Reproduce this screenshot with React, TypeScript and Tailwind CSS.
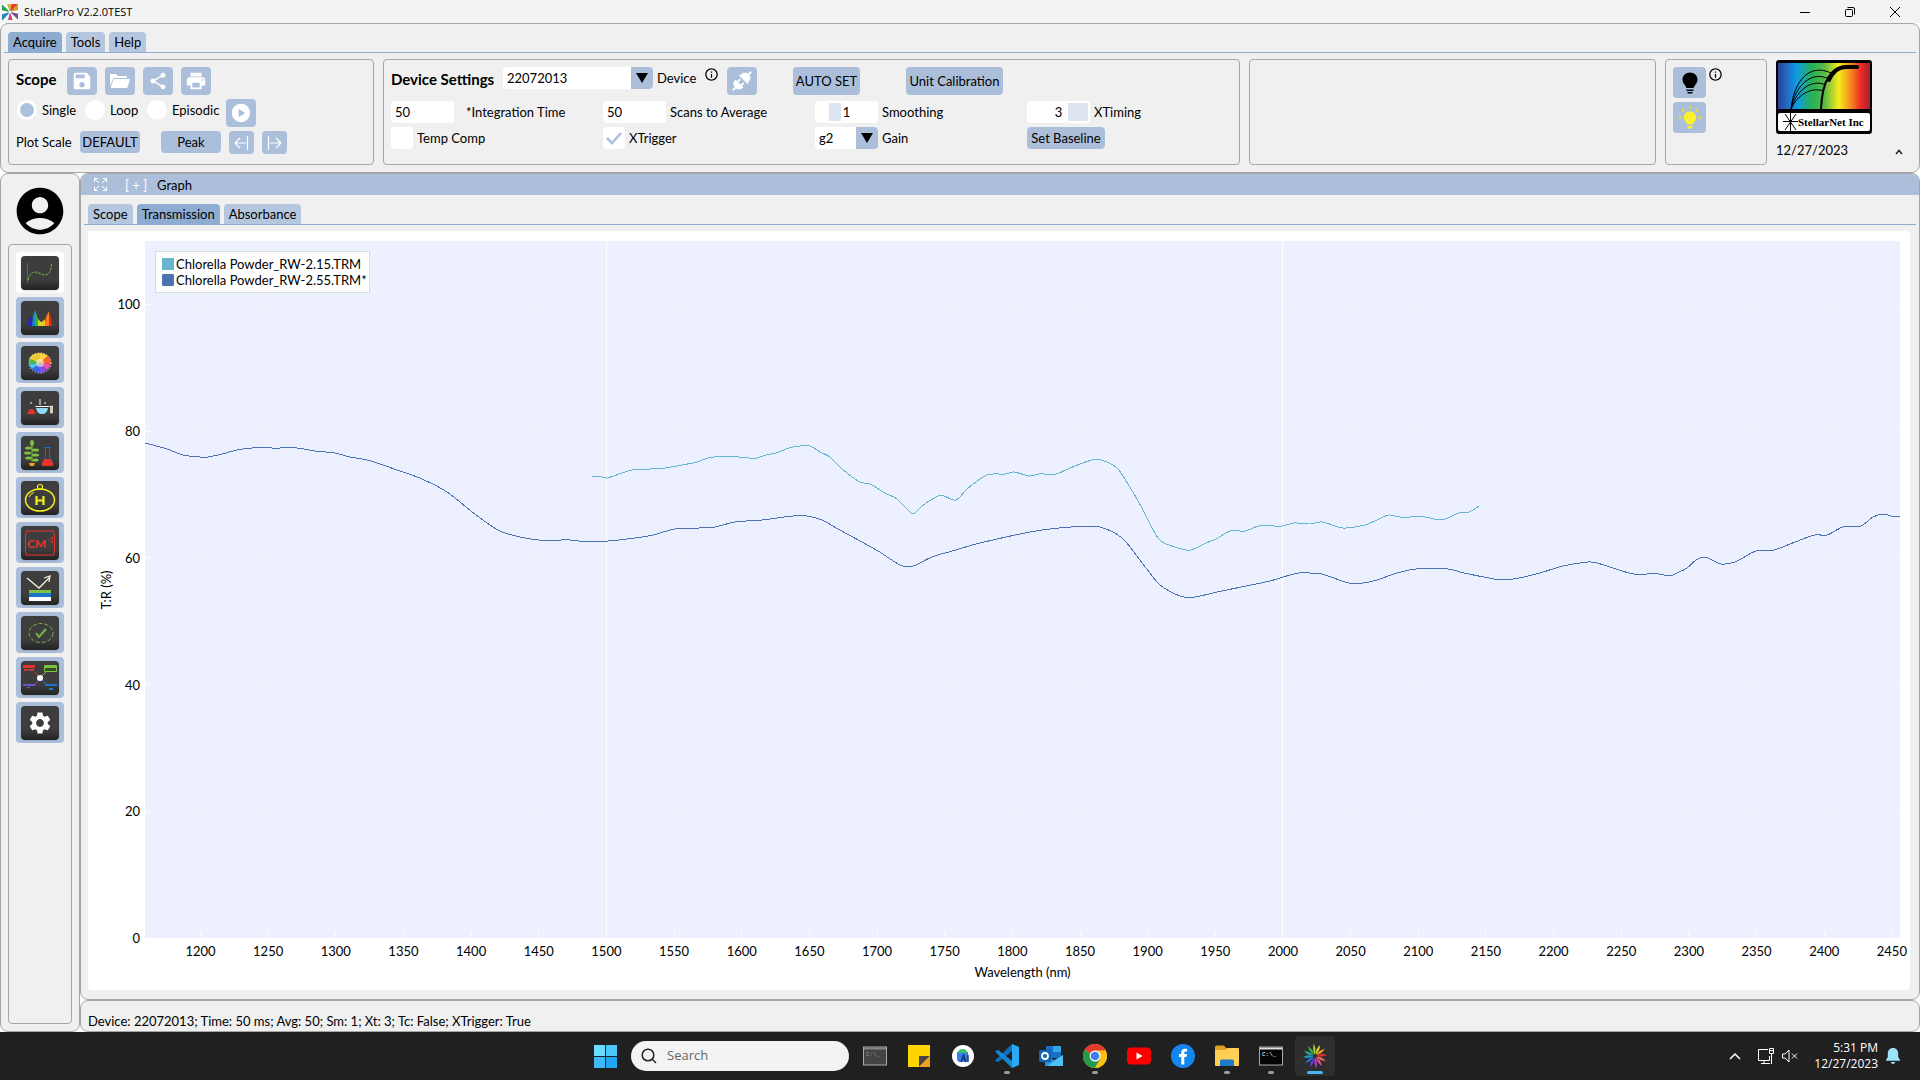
import type { ReactNode } from "react";
import { MdAccountCircle, MdInfoOutline, MdPlayCircle, MdPrint, MdSave, MdSettings, MdShare } from "react-icons/md";

type Point = [number, number];

const WAVE_MIN = 1159;
const WAVE_MAX = 2456;
const T_MAX = 110;

const xTicks = Array.from({ length: 26 }, (_, i) => 1200 + i * 50);
const yTicks = [0, 20, 40, 60, 80, 100];

// Plot units: 1755 wide, 697 high, origin top left
const scanA: Point[] = [
  [447, 236], [457, 236], [462, 237], [487, 229], [505, 228], [520, 227], [537, 224], [552, 221], [563, 217],
  [581, 215], [604, 217], [612, 217], [621, 214], [631, 212], [644, 207], [655, 205], [665, 205], [675, 211],
  [685, 216], [697, 228], [715, 241], [725, 243], [740, 252], [752, 258], [766, 272], [770, 272], [777, 265],
  [793, 255], [799, 255], [811, 259], [822, 248], [842, 234], [860, 233], [869, 231], [884, 235], [894, 233],
  [911, 233], [925, 227], [947, 219], [956, 219], [972, 227], [983, 243], [997, 267], [1011, 294], [1019, 302],
  [1041, 309], [1046, 309], [1061, 302], [1071, 298], [1085, 290], [1100, 290], [1114, 285], [1137, 285],
  [1149, 282], [1165, 283], [1177, 281], [1198, 287], [1220, 284], [1232, 279], [1244, 274], [1255, 276],
  [1280, 276], [1294, 279], [1303, 277], [1314, 272], [1324, 271], [1334, 265],
];

const scanB: Point[] = [
  [0, 202], [22, 208], [38, 214], [55, 216], [63, 216], [77, 213], [92, 209], [107, 207], [127, 207], [130, 208],
  [135, 207], [152, 207], [170, 210], [190, 212], [205, 216], [222, 219], [235, 223], [252, 229], [277, 238],
  [302, 251], [326, 270], [345, 284], [357, 291], [375, 296], [394, 299], [425, 299], [434, 300], [463, 300],
  [490, 297], [508, 294], [530, 288], [554, 287], [570, 286], [590, 281], [617, 279], [648, 275], [662, 275],
  [677, 279], [693, 288], [733, 310], [755, 324], [764, 326], [771, 324], [787, 316], [811, 309], [831, 303],
  [885, 291], [914, 287], [950, 285], [958, 287], [970, 292], [981, 301], [1001, 327], [1014, 343], [1028, 352],
  [1039, 356], [1050, 356], [1072, 351], [1125, 340], [1138, 336], [1154, 332], [1165, 332], [1177, 333],
  [1204, 342], [1218, 342], [1232, 339], [1252, 332], [1271, 328], [1303, 328], [1319, 332], [1344, 337],
  [1358, 339], [1374, 337], [1395, 332], [1418, 325], [1443, 321], [1452, 322], [1484, 332], [1498, 334],
  [1507, 332], [1526, 335], [1530, 333], [1542, 327], [1551, 319], [1559, 316], [1565, 318], [1576, 323],
  [1590, 321], [1611, 310], [1629, 309], [1645, 303], [1670, 294], [1682, 294], [1698, 286], [1716, 285],
  [1728, 276], [1739, 273], [1746, 275], [1755, 276],
];

const xPct = (nm: number) => `${((nm - WAVE_MIN) / (WAVE_MAX - WAVE_MIN)) * 100}%`;
const yPct = (t: number) => `${(1 - t / T_MAX) * 100}%`;

// Smooth curve through the samples, with control points a third of the way along x
function toPath(pts: Point[]) {
  const slope = (i: number) => {
    const a = pts[Math.max(i - 1, 0)];
    const b = pts[Math.min(i + 1, pts.length - 1)];
    return (b[1] - a[1]) / (b[0] - a[0]);
  };
  return pts
    .map(([x, y], i) => {
      if (i === 0) return `M${x} ${y}`;
      const [px, py] = pts[i - 1];
      const d = (x - px) / 3;
      return `C${px + d} ${py + slope(i - 1) * d} ${x - d} ${y - slope(i) * d} ${x} ${y}`;
    })
    .join("");
}

/* ---------- small pieces ---------- */

function Button({ children, className = "", label }: { children: ReactNode; className?: string; label?: string }) {
  return (
    <button
      type="button"
      aria-label={label}
      className={`flex shrink-0 items-center justify-center rounded bg-[#abbfdb] whitespace-nowrap ${className}`}
    >
      {children}
    </button>
  );
}

function Tab({ children, active }: { children: ReactNode; active?: boolean }) {
  return (
    <button
      type="button"
      className={`h-5 rounded-t px-[5px] leading-5 ${active ? "bg-[#8eabd1]" : "bg-[#b5c7df]"}`}
    >
      {children}
    </button>
  );
}

function Radio({ id, label, checked, width }: { id: string; label: string; checked?: boolean; width: string }) {
  return (
    <div className="flex items-center gap-[5px]">
      <input
        id={id}
        type="radio"
        name="mode"
        defaultChecked={checked}
        className="size-5 appearance-none rounded-full border-[3px] border-white bg-white checked:bg-[#abc2df]"
      />
      <label htmlFor={id} className={width}>
        {label}
      </label>
    </div>
  );
}

function Field({ id, label, value, gap }: { id: string; label: string; value: string; gap?: boolean }) {
  return (
    <div className={`flex items-center ${gap ? "gap-3" : "gap-1"}`}>
      <input id={id} defaultValue={value} className="h-[22px] w-[63px] rounded bg-white px-1" />
      <label htmlFor={id}>{label}</label>
    </div>
  );
}

function Check({ id, label, checked }: { id: string; label: string; checked?: boolean }) {
  return (
    <div className="flex items-center gap-1">
      <span className="relative size-[22px]">
        <input id={id} type="checkbox" defaultChecked={checked} className="peer block size-[22px] appearance-none rounded bg-white" />
        <svg viewBox="0 0 22 22" className="pointer-events-none absolute inset-0 hidden peer-checked:block">
          <path d="M4 11l5 5 9-10" fill="none" stroke="#abc2df" strokeWidth="2.6" />
        </svg>
      </span>
      <label htmlFor={id}>{label}</label>
    </div>
  );
}

function Slider({ id, label, value, min, max, wide }: { id: string; label: string; value: number; min: number; max: number; wide?: boolean }) {
  return (
    <div className="flex items-center gap-1">
      <span className="relative h-[22px] w-[63px]">
        <input
          id={id}
          type="range"
          min={min}
          max={max}
          defaultValue={value}
          className={`block h-[22px] w-full appearance-none rounded bg-white px-0.5 [&::-webkit-slider-thumb]:h-[18px] [&::-webkit-slider-thumb]:appearance-none [&::-webkit-slider-thumb]:bg-[#dde5f0] ${
            wide ? "[&::-webkit-slider-thumb]:w-5" : "[&::-webkit-slider-thumb]:w-3"
          }`}
        />
        <span className="pointer-events-none absolute inset-0 text-center leading-[22px]">{value}</span>
      </span>
      <label htmlFor={id}>{label}</label>
    </div>
  );
}

function Dropdown({ id, value, className }: { id: string; value: string; className: string }) {
  return (
    <span className={`relative h-[22px] overflow-hidden rounded ${className}`}>
      <select id={id} className="block h-[22px] w-full appearance-none bg-white px-1">
        <option>{value}</option>
      </select>
      <span className="pointer-events-none absolute inset-y-0 right-0 flex w-[22px] items-center justify-center bg-[#abbfdb]">
        <svg viewBox="0 0 12 10" className="h-2.5 w-3">
          <path d="M0 0h12L6 10z" />
        </svg>
      </span>
    </span>
  );
}

/* ---------- drawings ---------- */

function AppIcon() {
  const rays = ["#e33", "#f7941d", "#fff", "#8c3fa0", "#fff", "#e8357f", "#fff", "#2f7fd0", "#fff", "#28a745", "#fff", "#f0b429"];
  return (
    <svg viewBox="-8 -8 16 16" className="size-4">
      <rect x="-8" y="-8" width="16" height="16" fill="#3c8f6b" />
      {rays.map((c, i) => (
        <path key={i} d="M0 0L3-12Q7-12 8-9Z" fill={c} transform={`rotate(${i * 30})`} />
      ))}
      <circle r="1.6" fill="#fff" />
    </svg>
  );
}

function FolderIcon() {
  return (
    <svg viewBox="0 0 20 16" className="h-4 w-5" fill="#fff">
      <path d="M0 13V2q0-1 1-1h5l2 2h8q1 0 1 1v1H4.500q-1 0-1.300 1z" />
      <path d="M4.600 6H20l-2.400 8.200q-.2.8-1 .8H1.300q-.8 0-.5-.8L3.500 6.800q.3-.8 1.100-.8z" />
    </svg>
  );
}

function PlugIcon() {
  return (
    <svg viewBox="0 0 24 24" className="size-6" fill="#fff" stroke="#fff">
      <g transform="rotate(-45 12 12)">
        <path d="M-1 12h4" strokeWidth="2" />
        <path d="M8.500 6.500v11q-6 0-6-5.500t6-5.500z" stroke="none" />
        <path d="M8 9.500h4M8 14.500h4" strokeWidth="1.800" />
        <path d="M15 6.500v11q6.500 0 6.500-5.500T15 6.500z" stroke="none" />
        <path d="M20 12h5" strokeWidth="2" />
        <path d="M14.500 6v12" strokeWidth="1.500" />
      </g>
    </svg>
  );
}

function StepIcon({ flip }: { flip?: boolean }) {
  return (
    <svg viewBox="0 0 15 14" className={`h-3.5 w-[15px] ${flip ? "rotate-180" : ""}`} fill="none" stroke="#fff">
      <path d="M13.500 0v14M12 7H1M6 2L1 7l5 5" strokeWidth="1.200" />
    </svg>
  );
}

function Bulb({ lit }: { lit?: boolean }) {
  return lit ? (
    <svg viewBox="0 0 24 24" className="size-6" fill="#fbf02c">
      <path d="M12 5.500c-3.600 0-6.200 2.700-6.200 6 0 2.400 1.300 3.500 2.300 5 .6 1 .6 2 1.400 2h5c.8 0 .8-1 1.400-2 1-1.500 2.300-2.600 2.300-5 0-3.300-2.600-6-6.200-6zM9.500 20h5v1.500h-1l-.5 1.500h-2l-.5-1.500h-1z" />
      <path d="M12 0v3M4 3.500l2 2M20 3.500l-2 2M.5 11.500h3.500M20 11.500h3.500" stroke="#e5de2b" strokeWidth="2" />
    </svg>
  ) : (
    <svg viewBox="0 0 24 24" className="size-6">
      <path d="M12 1.500c-4.300 0-7.500 3.200-7.500 7 0 3 1.700 4.600 2.900 6.500.7 1.100.7 2 1.600 2h6c.9 0 .9-.9 1.600-2 1.200-1.900 2.900-3.500 2.900-6.500 0-3.800-3.200-7-7.500-7zM8.500 18.500h7v1.400h-7zM9.500 21h5v1.500h-5z" />
    </svg>
  );
}

function CompanyLogo() {
  return (
    <svg viewBox="0 0 96 74" className="h-[74px] w-24">
      <defs>
        <linearGradient id="spectrum">
          <stop offset="0" stopColor="#2e3f9e" />
          <stop offset=".2" stopColor="#0f9ae6" />
          <stop offset=".36" stopColor="#25b05a" />
          <stop offset=".5" stopColor="#55b948" />
          <stop offset=".66" stopColor="#f7ec1d" />
          <stop offset=".8" stopColor="#f58220" />
          <stop offset=".9" stopColor="#ee2a24" />
          <stop offset="1" stopColor="#a3242c" />
        </linearGradient>
      </defs>
      <rect width="96" height="74" rx="3" />
      <rect x="2" y="3" width="92" height="46" fill="url(#spectrum)" />
      <rect x="2" y="53" width="92" height="18" rx="2" fill="#fff" />
      <path d="M15 49C18 20 34 3 55 13M15 49C19 26 35 10 53 19M15 49C20 32 34 18 50 25M15 49C20 38 32 26 48 31" fill="none" stroke="#000" />
      <path d="M45 49C46 26 52 7 70 7H81" fill="none" stroke="#000" strokeWidth="2" />
      <path d="M53 20C57 11 62 7 70 7H81" fill="none" stroke="#000" strokeWidth="4" strokeLinecap="round" />
      <path d="M7 61.500h15M14.500 53v18M9 54l11 16M20 54L9 70" stroke="#000" />
      <text x="22" y="66" fontFamily="Liberation Serif, serif" fontWeight="700" fontSize="11">
        StellarNet Inc
      </text>
    </svg>
  );
}

const tools: { name: string; art: ReactNode }[] = [
  {
    name: "Scope",
    art: (
      <>
        <path d="M6.500 7v20" stroke="#d8322c" />
        <path d="M7 24C10 13 16 16 20 18S30 20 30.500 8" fill="none" stroke="#7cc142" strokeDasharray="2.500 1.200" />
      </>
    ),
  },
  {
    name: "Spectrum",
    art: (
      <>
        <path d="M7 25l1-8 3-2 1 10z" fill="#2b21c8" />
        <path d="M11 25l1-10 2-6 1 16z" fill="#1688c9" />
        <path d="M14 25V9l3 9 1 7z" fill="#2eb34a" />
        <path d="M17 25v-7l3 3 3-1v5z" fill="#c8dc2a" />
        <path d="M21 25v-4l3-3 1 7z" fill="#fbc21c" />
        <path d="M24 25l1-9 3-6v15z" fill="#f77f1e" />
        <path d="M28 25V10l2 7 1 8z" fill="#e5261f" />
      </>
    ),
  },
  {
    name: "Color",
    art: (
      <>
        <path d="M19 17L8 13A11 10 0 0 1 19 7z" fill="#e8c832" />
        <path d="M19 17V7a11 10 0 0 1 8 3z" fill="#ffd23c" />
        <path d="M19 17l8-7a11 10 0 0 1 3 8z" fill="#f8632c" />
        <path d="M19 17l11 1a11 10 0 0 1-4 6z" fill="#ef4fb5" />
        <path d="M19 17l7 7a11 10 0 0 1-7 3z" fill="#8a4df0" />
        <path d="M19 17v10a11 10 0 0 1-8-4z" fill="#3d62ee" />
        <path d="M19 17l-8 6a11 10 0 0 1-3-5z" fill="#45c8f0" />
        <path d="M19 17L8 18v-5z" fill="#4fc04a" />
        <circle cx="19" cy="17" r="4" fill="#fff3d0" opacity=".6" />
        <ellipse cx="19" cy="17" rx="11.200" ry="10.200" fill="none" stroke="#fff" strokeWidth=".8" strokeDasharray="1 2" />
      </>
    ),
  },
  {
    name: "Chemistry",
    art: (
      <>
        <path d="M6 23l3-5h3l3 5z" fill="#e5322c" />
        <path d="M15 17h12q-1 6-6 6t-6-6z" fill="#8edcf5" />
        <path d="M14.500 15.500h14M19 8v6M9 12h2M23 12h2" stroke="#fff" />
        <path d="M29.500 15h2v7h-2z" fill="#f6c667" stroke="#fff" strokeWidth=".6" />
      </>
    ),
  },
  {
    name: "Plant",
    art: (
      <>
        <path d="M11 9v17" stroke="#7cc142" />
        <g fill="#7cc142">
          <ellipse cx="11" cy="7" rx="2" ry="3" />
          <ellipse cx="7.500" cy="12" rx="3.500" ry="1.500" />
          <ellipse cx="14.500" cy="14" rx="3.500" ry="1.500" />
          <ellipse cx="6.500" cy="17" rx="3.500" ry="1.500" />
          <ellipse cx="14.500" cy="19" rx="3.500" ry="1.500" />
          <ellipse cx="7.500" cy="22" rx="3.500" ry="1.500" />
          <ellipse cx="14.500" cy="24" rx="3" ry="1.500" />
        </g>
        <path d="M8 27h6l-1 3H9z" fill="#f39c1f" />
        <path d="M23 11.500h7M24.500 12v9L21 28M28.500 12v9l3.500 7" fill="none" stroke="#1b6fc0" />
        <path d="M20.500 28l3-5h6l3 5-1 2h-10z" fill="#e9332b" />
      </>
    ),
  },
  {
    name: "Hazard",
    art: (
      <>
        <ellipse cx="19" cy="19" rx="14.500" ry="11" fill="none" stroke="#f4ee1c" strokeWidth="1.500" />
        <circle cx="19" cy="6" r="2.500" fill="none" stroke="#f4ee1c" strokeWidth="1.200" />
        <path d="M15.500 15v9M22.500 15v9M15 19.500h8" stroke="#f4ee1c" strokeWidth="2.200" />
        <path d="M8 16q2-4 5-4.500" fill="none" stroke="#f4ee1c" />
      </>
    ),
  },
  {
    name: "Wavenumber",
    art: (
      <>
        <path d="M5 9V5h28v4M5 26v3h28v-3M4.500 9v17M33.500 9v17" fill="none" stroke="#e5322c" />
        <text x="6" y="22" fontSize="12" fontWeight="700" fontFamily="Lato, sans-serif" fill="#e5322c">
          CM
        </text>
        <text x="26" y="17" fontSize="7" fontWeight="700" fontFamily="Lato, sans-serif" fill="#e5322c">
          -1
        </text>
      </>
    ),
  },
  {
    name: "Thin film",
    art: (
      <>
        <path d="M6 7l12 10L29 6M23 7l6-2-1 6" fill="none" stroke="#f5efd8" strokeWidth="1.300" />
        <path d="M8 19h22v3H8z" fill="#7cc142" />
        <path d="M8 22h22v4H8z" fill="#1976c8" />
        <path d="M8 26h22v4H8z" fill="#fff" />
      </>
    ),
  },
  {
    name: "Verify",
    art: (
      <>
        <ellipse cx="20" cy="17" rx="12" ry="9.500" fill="none" stroke="#7cb342" strokeDasharray="4 2" />
        <path d="M15 17l3 4 7-8" fill="none" stroke="#7cb342" strokeWidth="2" />
      </>
    ),
  },
  {
    name: "Workflow",
    art: (
      <>
        <path d="M14 11l5 6" stroke="#e5322c" />
        <path d="M26 10l-7 7" stroke="#7cc142" />
        <path d="M14 24l5-7" stroke="#6b57c5" />
        <path d="M25 23l-6-6" stroke="#1976c8" />
        <path d="M2 4h12v3H2zM3 8h4v2H3zM8 8h5v2H8z" fill="#e5322c" />
        <path d="M23.500 4.500h12v6h-12z" fill="#3b4a2b" stroke="#7cc142" />
        <path d="M24 6h11" stroke="#7cc142" strokeWidth="2" />
        <path d="M2 23h12v2H2zM6 26h3v1H6z" fill="#6b57c5" />
        <path d="M24 23h12v2H24zM28 27h4v2h-4z" fill="#1976c8" />
        <circle cx="19" cy="17" r="3" fill="#fff" />
      </>
    ),
  },
];

/* ---------- chart ---------- */

function Chart() {
  return (
    <div className="grid min-h-0 flex-1 grid-cols-[57px_1fr_10px] grid-rows-[10px_1fr_52px] rounded bg-white">
      <div className="relative col-start-1 row-start-2">
        <svg className="size-full overflow-visible" fontSize="13">
          {yTicks.map((t) => (
            <text key={t} x="52" y={yPct(t)} dy="5" textAnchor="end">
              {t}
            </text>
          ))}
        </svg>
        <div className="absolute inset-y-0 left-2 flex w-5 items-center justify-center">
          <span className="-rotate-90 whitespace-nowrap">T:R (%)</span>
        </div>
      </div>

      <div className="relative col-start-2 row-start-2 bg-[#ecf0ff]">
        <svg className="absolute inset-0 size-full" shapeRendering="crispEdges">
          {xTicks.map((nm) => (
            <g key={nm} stroke="#fff">
              <line
                x1={xPct(nm)}
                x2={xPct(nm)}
                y1="0"
                y2="100%"
                strokeOpacity={nm % 500 === 0 ? 1 : 0.3}
                strokeDasharray={nm % 500 === 0 ? undefined : "1 2"}
              />
              <svg x={xPct(nm)} y="100%" className="overflow-visible">
                <line y1="-5" y2="0" />
              </svg>
            </g>
          ))}
          {yTicks.map((t) => (
            <g key={t} stroke="#fff">
              <line x1="0" x2="100%" y1={yPct(t)} y2={yPct(t)} strokeOpacity="0.3" strokeDasharray="1 2" />
              <line x1="0" x2="5" y1={yPct(t)} y2={yPct(t)} />
            </g>
          ))}
        </svg>
        <svg viewBox="0 0 1755 697" preserveAspectRatio="none" className="absolute inset-0 size-full" fill="none" shapeRendering="crispEdges">
          <path d={toPath(scanA)} stroke="#64b5cd" vectorEffect="non-scaling-stroke" />
          <path d={toPath(scanB)} stroke="#4c72b0" vectorEffect="non-scaling-stroke" />
        </svg>
        <ul className="absolute top-2.5 left-2.5 border border-[#dcdcdc] bg-white py-1 pr-0.5 pl-1.5 leading-4">
          <li className="flex items-center gap-0.5">
            <span className="size-3 rounded-[1px] bg-[#64b5cd]" />
            Chlorella Powder_RW-2.15.TRM
          </li>
          <li className="flex items-center gap-0.5">
            <span className="size-3 rounded-[1px] bg-[#4c72b0]" />
            Chlorella Powder_RW-2.55.TRM*
          </li>
        </ul>
      </div>

      <div className="col-start-2 row-start-3 flex flex-col">
        <svg className="h-6 w-full overflow-visible" fontSize="13">
          {xTicks.map((nm) => (
            <text key={nm} x={xPct(nm)} y="18" textAnchor="middle">
              {nm}
            </text>
          ))}
        </svg>
        <div className="text-center leading-5">Wavelength (nm)</div>
      </div>
    </div>
  );
}

/* ---------- taskbar ---------- */

function Terminal({ light }: { light?: boolean }) {
  return (
    <svg viewBox="0 0 24 20" className="h-5 w-6">
      <rect x=".5" y="1" width="23" height="18" fill={light ? "#444" : "#050505"} stroke="#aaa" />
      <path d="M1 2.500h22" stroke={light ? "#888" : "#ddd"} strokeWidth="2" />
      <text x="3" y="10" fontSize="6" fontFamily="Liberation Mono, monospace" fill={light ? "#999" : "#fff"}>
        C:\_
      </text>
    </svg>
  );
}

const apps: { name: string; running?: boolean; active?: boolean; art: ReactNode }[] = [
  { name: "Console", art: <Terminal light /> },
  {
    name: "Notes",
    art: (
      <svg viewBox="0 0 22 22" className="size-[22px]">
        <path d="M0 0h22v22H0z" fill="#ffd400" />
        <path d="M11 11h11L11 22z" fill="#444" />
        <path d="M22 11v11H11z" fill="#f0a020" />
      </svg>
    ),
  },
  {
    name: "Android Studio",
    art: (
      <svg viewBox="0 0 24 24" className="size-6">
        <circle cx="12" cy="12" r="11" fill="#fff" />
        <path d="M6 8h11v10H8l-2-2z" fill="#3a7df0" />
        <path d="M7 9q0-4 4.500-4T16 9z" fill="#3ac06b" />
        <path d="M10 18l2.500-7 2.500 7M11 15.500h3M17 11v7" fill="none" stroke="#153a6e" strokeWidth="1.400" />
      </svg>
    ),
  },
  {
    name: "Code",
    running: true,
    art: (
      <svg viewBox="0 0 24 24" className="size-6">
        <path d="M17 0l7 3v18l-7 3z" fill="#29a9f2" />
        <path d="M17 0L2 14.500 0 16l2 2 2-.5L17 7z" fill="#0d6fb8" />
        <path d="M17 24L2 9.500.3 8 2 6l2 .5L17 17z" fill="#1687d2" />
      </svg>
    ),
  },
  {
    name: "Outlook",
    art: (
      <svg viewBox="0 0 24 24" className="size-6">
        <path d="M7 2h15v12H7z" fill="#1a6fc4" />
        <path d="M14 2h8v6h-8z" fill="#33a7ea" />
        <path d="M6 11l9 5 9-5v11H6z" fill="#2493dd" />
        <path d="M24 11v11H8z" fill="#4cc2f4" />
        <rect y="6" width="12" height="12" rx="1" fill="#0f62b4" />
        <circle cx="6" cy="12" r="3" fill="none" stroke="#fff" strokeWidth="1.800" />
      </svg>
    ),
  },
  {
    name: "Chrome",
    running: true,
    art: (
      <svg viewBox="0 0 24 24" className="size-6">
        <circle cx="12" cy="12" r="12" fill="#fbc116" />
        <path d="M12 12L1.600 6A12 12 0 0 1 22.400 6z" fill="#e33b2e" />
        <path d="M1.600 6A12 12 0 0 0 12 24l5.200-9L12 12z" fill="#229a4c" />
        <path d="M12 6.500h10.600A12 12 0 0 1 12 24l5-9z" fill="#fbc116" />
        <circle cx="12" cy="12" r="5.500" fill="#fff" />
        <circle cx="12" cy="12" r="4.300" fill="#3c7ff0" />
      </svg>
    ),
  },
  {
    name: "YouTube",
    art: (
      <svg viewBox="0 0 24 24" className="size-6">
        <rect y="3.500" width="24" height="17" rx="4" fill="#f00" />
        <path d="M9.500 8.500v7l6-3.500z" fill="#fff" />
      </svg>
    ),
  },
  {
    name: "Facebook",
    art: (
      <svg viewBox="0 0 24 24" className="size-6">
        <circle cx="12" cy="12" r="12" fill="#1486f0" />
        <path d="M10.300 20.500V13H8v-3h2.300V8.300Q10.300 4.700 14 4.700h2v2.800h-1.400q-1.300 0-1.300 1.300V10H16l-.5 3h-2.200v7.500z" fill="#fff" />
      </svg>
    ),
  },
  {
    name: "Files",
    running: true,
    art: (
      <svg viewBox="0 0 24 24" className="size-6">
        <path d="M0 3q0-1.500 1.500-1.500H9L11 4v6H0z" fill="#e0a020" />
        <path d="M0 6h10l2-2h11q1 0 1 1v16q0 1-1 1H1q-1 0-1-1z" fill="#ffcf54" />
        <path d="M5 22v-5q0-1.500 1.500-1.500h11q1.500 0 1.500 1.500v5z" fill="#1b7cc8" />
      </svg>
    ),
  },
  { name: "Command Prompt", running: true, art: <Terminal /> },
  {
    name: "StellarPro",
    active: true,
    art: (
      <svg viewBox="-12 -12 24 24" className="size-6">
        {["#9bd23c", "#f5d020", "#f0a02a", "#e5322c", "#f0705a", "#ee4f9b", "#c03ad0", "#6a3ae0", "#2f6fe0", "#1f9ed0", "#23b5a0", "#3bb54a"].map(
          (c, i) => (
            <path key={c} d="M0-2Q2.500-6 1-11.500Q-1.500-7 0-2z" fill={c} stroke={c} strokeWidth=".4" transform={`rotate(${i * 30 - 10})`} />
          )
        )}
      </svg>
    ),
  },
];

function Taskbar() {
  return (
    <footer className="grid h-12 shrink-0 grid-cols-[1fr_auto_1fr] items-center bg-[#202020] font-['Open_Sans',sans-serif] text-xs text-white">
      <div />
      <div className="flex h-12 items-center">
        <button type="button" aria-label="Start" className="flex w-11 items-center justify-center">
          <svg viewBox="0 0 23 23" className="size-[23px]">
            <path d="M0 0h11v11H0z" fill="#6adcff" />
            <path d="M12 0h11v11H12z" fill="#4cc8fb" />
            <path d="M0 12h11v11H0z" fill="#3db9f8" />
            <path d="M12 12h11v11H12z" fill="#22a5f2" />
          </svg>
        </button>
        <label className="mx-1 flex h-[30px] w-[218px] items-center gap-2.5 rounded-full bg-[#f3f3f3] pl-2.5">
          <svg viewBox="0 0 16 16" className="size-4" fill="none" stroke="#222" strokeWidth="1.500">
            <circle cx="7" cy="7" r="5.800" />
            <path d="M11 11l4 4" />
          </svg>
          <input aria-label="Search" placeholder="Search" className="w-36 text-[13px] placeholder:text-[#666]" />
        </label>
        {apps.map((app) => (
          <button
            key={app.name}
            type="button"
            aria-label={app.name}
            className={`relative mx-0.5 flex size-10 items-center justify-center rounded ${app.active ? "bg-[#2e2e2e]" : ""}`}
          >
            {app.art}
            {app.running && <span className="absolute bottom-0.5 h-[3px] w-1.5 rounded-full bg-[#9a9a9a]" />}
            {app.active && <span className="absolute bottom-0.5 h-[3px] w-4 rounded-full bg-[#42b8f5]" />}
          </button>
        ))}
      </div>
      <div className="flex items-center justify-end pr-5">
        <svg viewBox="0 0 12 8" className="mr-4 h-2 w-3" fill="none" stroke="#fff" strokeWidth="1.500">
          <path d="M1 7l5-5 5 5" />
        </svg>
        <svg viewBox="0 0 18 18" className="mr-1.5 size-[18px]" fill="none" stroke="#fff">
          <path d="M11 2.500H1.500v11h11V9M4 16.500h9M7 14v2M12.500 1.500h4v5h-4zM14.500 7v10M12.500 3.500h4" />
        </svg>
        <svg viewBox="0 0 17 14" className="mr-4 h-3.5 w-[17px]" fill="none" stroke="#fff">
          <path d="M1.500 5v4h2.500l4 4V1L4 5zM11 4.500l5 5M16 4.500l-5 5" />
        </svg>
        <div className="mr-2 text-right leading-4">
          <div>5:31 PM</div>
          <div>12/27/2023</div>
        </div>
        <svg viewBox="0 0 14 16" className="h-4 w-3.5" fill="#9fe3fb">
          <path d="M7 0C3.500 0 1.800 2.500 1.800 5.500V9L0 12v.8h14V12l-1.800-3V5.500C12.200 2.500 10.500 0 7 0zM4.800 14h4.400Q8.800 16 7 16t-2.200-2z" />
        </svg>
      </div>
    </footer>
  );
}

/* ---------- ribbon ---------- */

function Ribbon() {
  return (
    <section className="h-[150px] shrink-0 rounded-lg border border-[#a6a6a6] bg-[#f0f0f0] px-[3px] pt-2">
      <nav className="flex gap-1 border-b border-[#8eabd1] px-1">
        <Tab active>Acquire</Tab>
        <Tab>Tools</Tab>
        <Tab>Help</Tab>
      </nav>
      <div className="mt-1.5 flex gap-[9px] px-1">
        <div className="h-[106px] w-[366px] shrink-0 rounded border border-[#a6a6a6] px-[7px] pt-[7px]">
          <div className="flex items-start gap-2">
            <h2 className="w-[43px] text-[15px] leading-6 font-bold">Scope</h2>
            <Button className="h-7 w-[30px]" label="Save">
              <MdSave className="size-[22px] text-white" />
            </Button>
            <Button className="h-7 w-[30px]" label="Open">
              <FolderIcon />
            </Button>
            <Button className="h-7 w-[30px]" label="Share">
              <MdShare className="size-5 text-white" />
            </Button>
            <Button className="h-7 w-[30px]" label="Print">
              <MdPrint className="size-[22px] text-white" />
            </Button>
          </div>
          <div className="mt-1 flex items-center gap-2">
            <div className="flex gap-[9px] pb-1.5 pl-px">
              <Radio id="single" label="Single" width="w-[34px]" checked />
              <Radio id="loop" label="Loop" width="w-7" />
              <Radio id="episodic" label="Episodic" width="w-[46px]" />
            </div>
            <Button className="h-7 w-[30px]" label="Run">
              <MdPlayCircle className="size-[22px] text-white" />
            </Button>
          </div>
          <div className="mt-1 flex items-start gap-2 leading-[22px]">
            <span className="w-14 whitespace-nowrap">Plot Scale</span>
            <Button className="h-[22px] w-[60px]">DEFAULT</Button>
            <Button className="ml-[13px] h-[22px] w-[60px]">Peak</Button>
            <Button className="h-[23px] w-[25px]" label="Previous peak">
              <StepIcon />
            </Button>
            <Button className="h-[23px] w-[25px]" label="Next peak">
              <StepIcon flip />
            </Button>
          </div>
        </div>

        <div className="h-[106px] w-[857px] shrink-0 rounded border border-[#a6a6a6] px-[7px] pt-[7px]">
          <div className="flex items-start">
            <h2 className="w-28 text-[15px] leading-6 font-bold whitespace-nowrap">Device Settings</h2>
            <Dropdown id="device" value="22072013" className="w-[150px]" />
            <label htmlFor="device" className="ml-1 w-[47px] leading-[22px]">
              Device
            </label>
            <MdInfoOutline className="size-[15px]" />
            <Button className="ml-2 h-7 w-[30px]" label="Connect">
              <PlugIcon />
            </Button>
            <Button className="ml-9 h-7 w-[67px]">AUTO SET</Button>
            <Button className="ml-[46px] h-7 w-[97px]">Unit Calibration</Button>
          </div>
          <div className="mt-1.5 grid grid-cols-[repeat(4,212px)] gap-y-1 whitespace-nowrap">
            <Field id="integration" label="*Integration Time" value="50" gap />
            <Field id="scans" label="Scans to Average" value="50" />
            <Slider id="smoothing" label="Smoothing" value={1} min={0} max={4} />
            <Slider id="xtiming" label="XTiming" value={3} min={1} max={3} wide />
            <Check id="tempcomp" label="Temp Comp" />
            <Check id="xtrigger" label="XTrigger" checked />
            <div className="flex items-center gap-1">
              <Dropdown id="gain" value="g2" className="w-[63px]" />
              <label htmlFor="gain">Gain</label>
            </div>
            <Button className="h-[22px] w-[78px]">Set Baseline</Button>
          </div>
        </div>

        <div className="h-[106px] flex-1 rounded border border-[#a6a6a6]" />

        <div className="flex h-[106px] w-[102px] shrink-0 gap-0.5 rounded border border-[#a6a6a6] px-[7px] pt-[7px]">
          <div className="flex flex-col gap-1">
            <Button className="h-[31px] w-[33px]" label="Lamp off">
              <Bulb />
            </Button>
            <Button className="h-[31px] w-[33px]" label="Lamp on">
              <Bulb lit />
            </Button>
          </div>
          <MdInfoOutline className="size-[15px]" />
        </div>

        <div className="w-[136px] shrink-0 pt-px">
          <CompanyLogo />
          <div className="mt-1.5 flex items-center justify-between pr-[9px]">
            <span>12/27/2023</span>
            <svg viewBox="0 0 8 6" className="mt-1 h-1.5 w-2" fill="none" stroke="#222" strokeWidth="1.500">
              <path d="M1 5l3-3.500L7 5" />
            </svg>
          </div>
        </div>
      </div>
    </section>
  );
}

export default function App() {
  return (
    <div className="flex h-screen flex-col bg-white font-[Lato,sans-serif] text-[13px] leading-5 text-black">
      <header className="flex h-[23px] shrink-0 items-center bg-[#f3f3f3] pl-0.5 font-['Open_Sans',sans-serif] text-[11px]">
        <AppIcon />
        <h1 className="ml-1.5">StellarPro V2.2.0TEST</h1>
        <div className="ml-auto flex items-center pr-[3px] text-black">
          <button type="button" aria-label="Minimize" className="flex w-[45px] justify-center">
            <svg viewBox="0 0 10 10" className="size-2.5" stroke="#000">
              <path d="M0 5.500h10" />
            </svg>
          </button>
          <button type="button" aria-label="Restore" className="flex w-[45px] justify-center">
            <svg viewBox="0 0 10 10" className="size-2.5" fill="none" stroke="#000">
              <rect x=".5" y="2.500" width="7" height="7" rx="1" />
              <path d="M2.500.5H8Q9.500.5 9.500 2v5.500" />
            </svg>
          </button>
          <button type="button" aria-label="Close" className="flex w-[45px] justify-center">
            <svg viewBox="0 0 10 10" className="size-2.5" stroke="#000">
              <path d="M0 0l10 10M10 0L0 10" />
            </svg>
          </button>
        </div>
      </header>

      <Ribbon />

      <div className="flex min-h-0 flex-1">
        <aside className="flex w-20 shrink-0 flex-col items-center rounded-lg border border-[#a6a6a6] bg-[#f0f0f0] px-[7px] pt-[9px] pb-[7px]">
          <button type="button" aria-label="Account">
            <MdAccountCircle className="size-14" />
          </button>
          <div className="mt-[5px] flex w-16 flex-1 flex-col items-center gap-1 rounded border border-[#a6a6a6] pt-[7px]">
            {tools.map((tool, i) => (
              <button
                key={tool.name}
                type="button"
                aria-label={tool.name}
                className={`flex h-[41px] w-12 items-center justify-center rounded ${i === 0 ? "bg-white" : "bg-[#abbfdb]"}`}
              >
                <svg viewBox="0 0 38 34" className="h-[34px] w-[38px] rounded-sm bg-linear-to-b from-[#3d3d3d] from-70% to-[#222] shadow">
                  {tool.art}
                </svg>
              </button>
            ))}
            <button type="button" aria-label="Settings" className="flex h-[41px] w-12 items-center justify-center rounded bg-[#abbfdb]">
              <span className="flex h-[34px] w-[38px] items-center justify-center rounded-sm bg-linear-to-b from-[#3d3d3d] from-70% to-[#222] shadow">
                <MdSettings className="size-[26px] text-white" />
              </span>
            </button>
          </div>
        </aside>

        <div className="flex min-w-0 flex-1 flex-col">
          <main className="flex min-h-0 flex-1 flex-col overflow-hidden rounded-lg border border-[#a6a6a6] bg-[#f0f0f0]">
            <div className="flex h-[21px] shrink-0 items-center bg-[#abbfdb] pl-[13px]">
              <svg viewBox="0 0 13 13" className="size-[13px]" fill="none" stroke="#fff">
                <path d="M.5 4V.5H4M9 .5h3.500V4M12.500 9v3.500H9M4 12.500H.5V9M1 1l4 4M12 1L8 5M12 12L8 8M1 12l4-4" />
              </svg>
              <span className="ml-[18px] w-8 text-white">[ + ]</span>
              <h2>Graph</h2>
            </div>
            <nav className="mx-[3px] mt-[9px] flex gap-1 border-b border-[#8eabd1] px-1">
              <Tab>Scope</Tab>
              <Tab active>Transmission</Tab>
              <Tab>Absorbance</Tab>
            </nav>
            <div className="flex min-h-0 flex-1 pt-1.5 pr-[9px] pb-[9px] pl-[7px]">
              <Chart />
            </div>
          </main>
          <div className="flex h-8 shrink-0 items-end rounded-lg border border-[#a6a6a6] bg-[#f0f0f0] px-[7px]">
            Device: 22072013; Time: 50 ms; Avg: 50; Sm: 1; Xt: 3; Tc: False; XTrigger: True
          </div>
        </div>
      </div>

      <Taskbar />
    </div>
  );
}
